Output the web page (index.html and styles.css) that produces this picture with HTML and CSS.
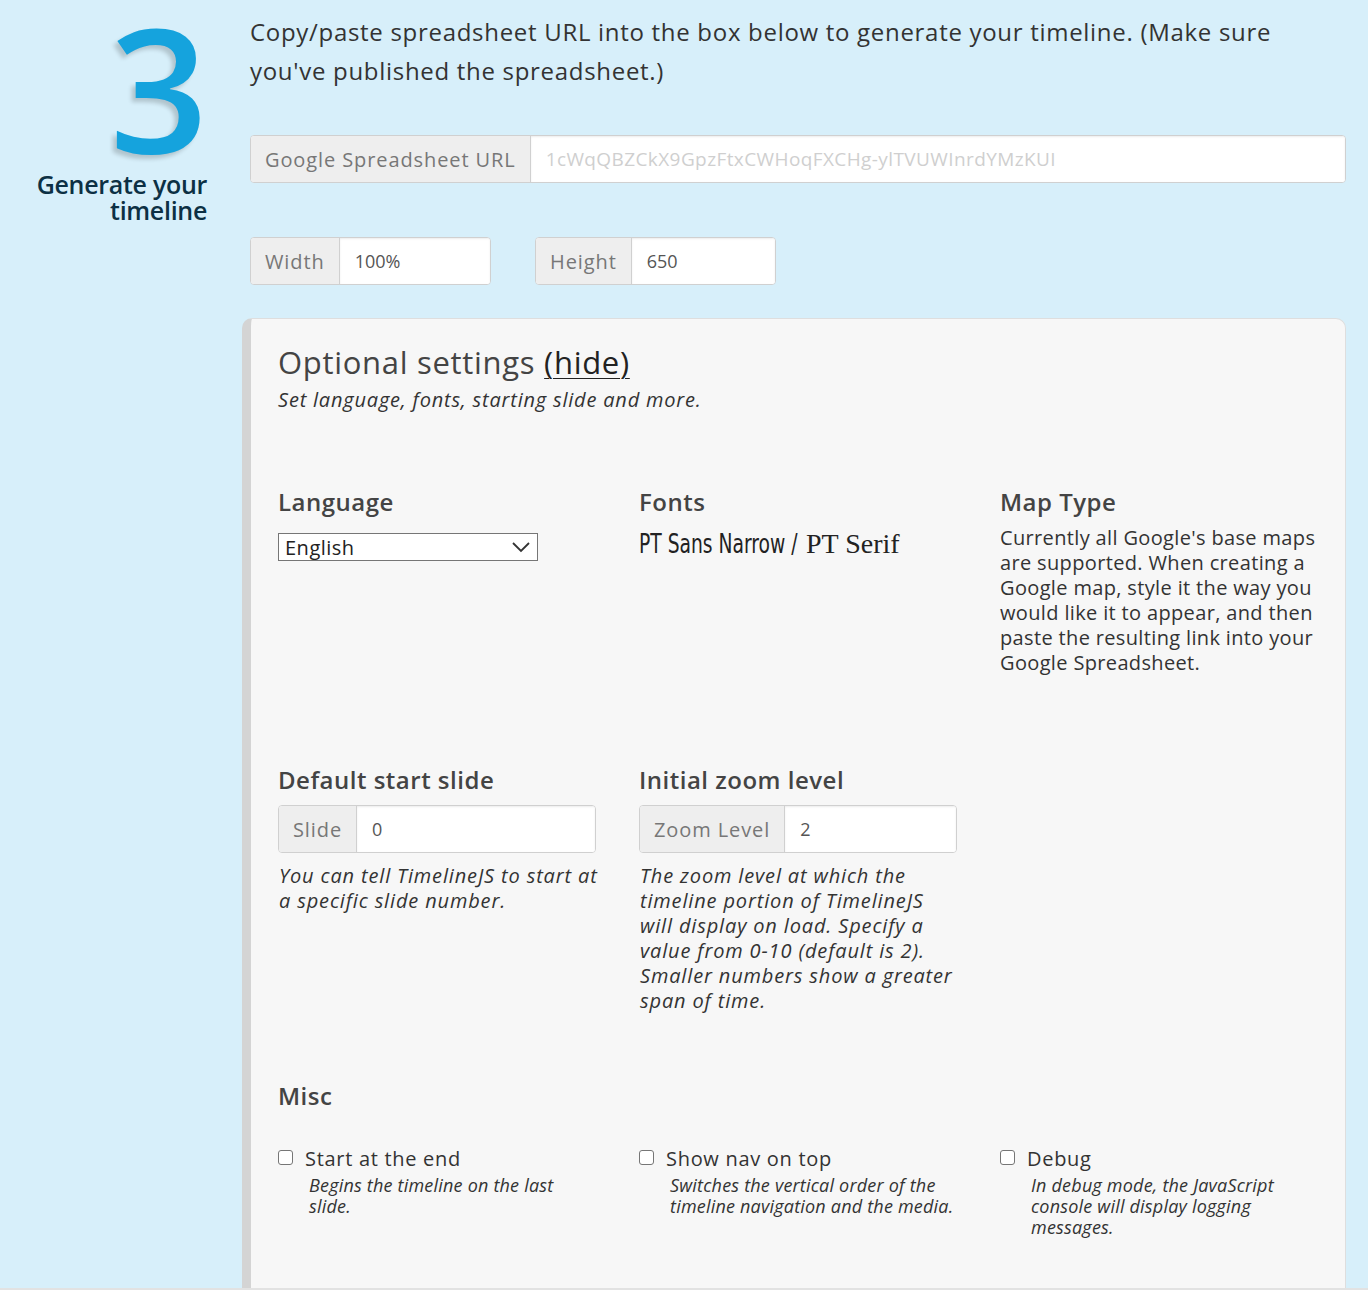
FILE: index.html
```html
<!DOCTYPE html>
<html lang="en">
<head>
<meta charset="utf-8">
<title>Generate your timeline</title>
<link rel="stylesheet" href="styles.css">
</head>
<body>
<div class="page">
  <section class="step">
    <div class="step-side">
      <div class="step-num">3</div>
      <h2 class="step-title">Generate your<br>timeline</h2>
    </div>
    <div class="step-main">
      <p class="intro">Copy/paste spreadsheet URL into the box below to generate your timeline. (Make sure you've published the spreadsheet.)</p>

      <div class="igroup igroup-url">
        <span class="addon">Google Spreadsheet URL</span>
        <input class="field" type="text" placeholder="1cWqQBZCkX9GpzFtxCWHoqFXCHg-ylTVUWInrdYMzKUI">
      </div>

      <div class="dims">
        <div class="igroup igroup-dim">
          <span class="addon">Width</span>
          <input class="field" type="text" value="100%">
        </div>
        <div class="igroup igroup-dim">
          <span class="addon">Height</span>
          <input class="field" type="text" value="650">
        </div>
      </div>

      <div class="panel">
        <h3 class="panel-title">Optional settings <a class="hide-link" href="#">(hide)</a></h3>
        <p class="panel-sub">Set language, fonts, starting slide and more.</p>

        <div class="grid row-1">
          <div class="col">
            <h4 class="col-head">Language</h4>
            <div class="select">
              <span>English</span>
              <svg class="chev" width="20" height="12" viewBox="0 0 20 12"><path d="M2 2 L10 10 L18 2" fill="none" stroke="#333" stroke-width="1.8"/></svg>
            </div>
          </div>
          <div class="col">
            <h4 class="col-head">Fonts</h4>
            <div class="fonts"><span class="f-narrow">PT Sans Narrow /</span> <span class="f-serif">PT Serif</span></div>
          </div>
          <div class="col">
            <h4 class="col-head">Map Type</h4>
            <p class="col-text">Currently all Google's base maps are supported. When creating a Google map, style it the way you would like it to appear, and then paste the resulting link into your Google Spreadsheet.</p>
          </div>
        </div>

        <div class="grid row-2">
          <div class="col">
            <h4 class="col-head">Default start slide</h4>
            <div class="igroup igroup-col">
              <span class="addon">Slide</span>
              <input class="field" type="text" value="0">
            </div>
            <p class="col-desc">You can tell TimelineJS to start at a specific slide number.</p>
          </div>
          <div class="col">
            <h4 class="col-head">Initial zoom level</h4>
            <div class="igroup igroup-col">
              <span class="addon">Zoom Level</span>
              <input class="field" type="text" value="2">
            </div>
            <p class="col-desc">The zoom level at which the timeline portion of TimelineJS will display on load. Specify a value from 0-10 (default is 2). Smaller numbers show a greater span of time.</p>
          </div>
          <div class="col"></div>
        </div>

        <h4 class="col-head misc-head">Misc</h4>
        <div class="grid row-3">
          <div class="col">
            <label class="check"><span class="box"></span>Start at the end</label>
            <p class="check-desc">Begins the timeline on the last slide.</p>
          </div>
          <div class="col">
            <label class="check"><span class="box"></span>Show nav on top</label>
            <p class="check-desc">Switches the vertical order of the timeline navigation and the media.</p>
          </div>
          <div class="col">
            <label class="check"><span class="box"></span>Debug</label>
            <p class="check-desc">In debug mode, the JavaScript console will display logging messages.</p>
          </div>
        </div>
      </div>
    </div>
  </section>
  <div class="footer-rule"></div>
</div>
</body>
</html>
```

FILE: styles.css
```css
* { box-sizing: border-box; }

html, body {
  margin: 0;
  padding: 0;
}

body {
  background: #d7effa;
  font-family: "Open Sans", "DejaVu Sans", sans-serif;
  color: #333;
}

.page {
  width: 1368px;
  height: 1290px;
  overflow: hidden;
}

.step {
  display: flex;
  align-items: flex-start;
}

.step-side {
  width: 207px;
  margin-right: 43px;
  text-align: right;
  flex: none;
}

.step-num {
  font-family: "Open Sans", sans-serif;
  font-size: 172px;
  line-height: 160px;
  height: 160px;
  font-weight: 600;
  color: #15a3dd;
  text-shadow: -4px 4px 4px rgba(0, 0, 0, 0.18);
  margin-top: 6px;
  margin-right: -1px;
}

.step-title {
  margin: 5px 0 0;
  font-size: 25px;
  line-height: 26px;
  font-weight: 600;
  letter-spacing: -0.3px;
  color: #0c3044;
}

.step-main {
  width: 1096px;
  flex: none;
}

.intro {
  margin: 12px 0 0;
  padding-right: 16px;
  font-size: 24px;
  line-height: 39px;
  letter-spacing: 0.7px;
  color: #333;
}

.igroup {
  display: flex;
  height: 48px;
  border: 1px solid #d0d0d0;
  border-radius: 4px;
  overflow: hidden;
  background: #fff;
}

.addon {
  flex: none;
  display: flex;
  align-items: center;
  padding: 0 14px;
  background: #eee;
  border-right: 1px solid #d0d0d0;
  color: #777;
  font-size: 20px;
  letter-spacing: 0.9px;
}

.field {
  flex: 1;
  min-width: 0;
  border: 0;
  outline: 0;
  padding: 0 15px;
  font-family: "Open Sans", sans-serif;
  font-size: 18px;
  color: #555;
  background: #fff;
  box-shadow: inset 0 1px 2px rgba(0, 0, 0, 0.08);
}

.field::placeholder {
  color: #cfcfcf;
  font-size: 19px;
  letter-spacing: 0.4px;
}

.igroup-url {
  margin-top: 45px;
  width: 1096px;
}

.dims {
  display: flex;
  gap: 44px;
  margin-top: 54px;
}

.igroup-dim {
  width: 241px;
}

.panel {
  margin-top: 33px;
  margin-left: -8px;
  background: #f7f7f7;
  border-left: 9px solid #d4d4d4;
  border-top: 1px solid #dedede;
  border-right: 1px solid #dedede;
  border-radius: 10px 10px 0 0;
  padding: 25px 27px 50px 27px;
  color: #444;
}

.panel-title {
  margin: 0;
  font-size: 31px;
  line-height: 36px;
  font-weight: 500;
  color: #444;
  letter-spacing: 0.7px;
}

.hide-link {
  color: #222;
  text-decoration: underline;
  text-decoration-thickness: 1px;
  text-underline-offset: 4px;
}

.panel-sub {
  margin: 7px 0 0;
  font-size: 20px;
  line-height: 26px;
  font-style: italic;
  letter-spacing: 0.8px;
  color: #333;
}

.grid {
  display: grid;
  grid-template-columns: repeat(3, 318px);
  column-gap: 43px;
}

.row-1 { margin-top: 74px; }
.row-2 { margin-top: 90px; }
.row-3 { margin-top: 35px; }

.col-head {
  margin: 0;
  font-size: 24px;
  line-height: 30px;
  font-weight: 600;
  color: #444;
  letter-spacing: 0.5px;
}

.select {
  margin-top: 16px;
  width: 260px;
  height: 28px;
  border: 1px solid #767676;
  background: #fff;
  display: flex;
  align-items: center;
  justify-content: space-between;
  padding: 0 6px 0 6px;
  font-size: 20px;
  letter-spacing: 0.5px;
  color: #222;
}

.chev { flex: none; }

.fonts {
  margin-top: 10px;
  font-size: 26px;
  line-height: 32px;
  color: #222;
  white-space: nowrap;
}

.f-narrow {
  display: inline-block;
  font-family: "DejaVu Sans Condensed", "Liberation Sans Narrow", sans-serif;
  transform: scaleX(0.8);
  transform-origin: left center;
  margin-right: -38px;
}

.f-serif {
  font-family: "Liberation Serif", serif;
  font-size: 28px;
}

.col-text {
  margin: 8px 0 0;
  font-size: 20px;
  line-height: 25px;
  letter-spacing: 0.35px;
  color: #333;
}

.igroup-col {
  margin-top: 10px;
  width: 318px;
}

.col-desc {
  margin: 10px -4px 0 0;
  font-size: 20px;
  line-height: 25px;
  font-style: italic;
  letter-spacing: 0.85px;
  color: #333;
  padding-left: 1px;
}

.misc-head { margin-top: 68px; }

.check {
  display: flex;
  align-items: center;
  font-size: 20px;
  line-height: 25px;
  letter-spacing: 0.7px;
  color: #333;
}

.box {
  flex: none;
  width: 15px;
  height: 15px;
  border: 1.5px solid #767676;
  border-radius: 3px;
  background: #fff;
  margin-right: 12px;
  margin-top: -3px;
}

.check-desc {
  margin: 4px -4px 0 31px;
  font-size: 18px;
  line-height: 21px;
  font-style: italic;
  letter-spacing: 0.2px;
  color: #333;
}

.footer-rule {
  border-top: 2px solid #e2e2e2;
}
```
